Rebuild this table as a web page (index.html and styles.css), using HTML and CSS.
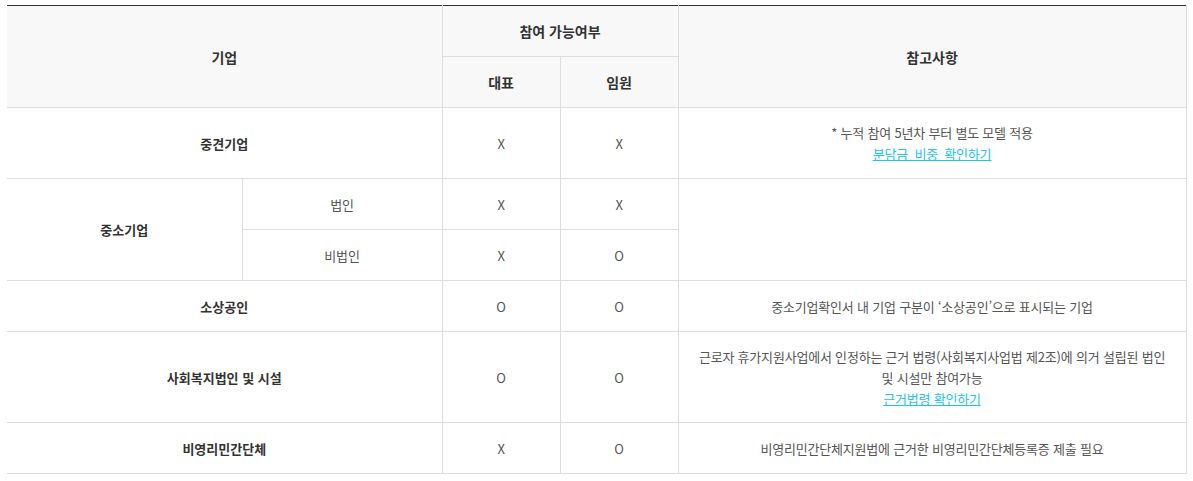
FILE: index.html
```html
<!DOCTYPE html>
<html lang="ko">
<head>
    <meta charset="UTF-8">
    <title>참여 가능여부</title>
    <link rel="stylesheet" href="styles.css">
</head>
<body>
    <div class="wrap">
        <table class="tbl">
            <colgroup>
                <col class="c-corp">
                <col class="c-sub">
                <col class="c-yn">
                <col class="c-yn">
                <col class="c-note">
            </colgroup>
            <thead>
                <tr>
                    <th colspan="2" rowspan="2" class="first">기업</th>
                    <th colspan="2">참여 가능여부</th>
                    <th rowspan="2">참고사항</th>
                </tr>
                <tr>
                    <th>대표</th>
                    <th>임원</th>
                </tr>
            </thead>
            <tbody>
                <tr class="tall">
                    <th colspan="2" class="first">중견기업</th>
                    <td>X</td>
                    <td>X</td>
                    <td>* 누적 참여 5년차 부터 별도 모델 적용<br><a href="#" class="wide">분담금 비중 확인하기</a></td>
                </tr>
                <tr>
                    <th rowspan="2" class="first">중소기업</th>
                    <td>법인</td>
                    <td>X</td>
                    <td>X</td>
                    <td rowspan="2"></td>
                </tr>
                <tr>
                    <td>비법인</td>
                    <td>X</td>
                    <td>O</td>
                </tr>
                <tr>
                    <th colspan="2" class="first">소상공인</th>
                    <td>O</td>
                    <td>O</td>
                    <td>중소기업확인서 내 기업 구분이 ‘소상공인’으로 표시되는 기업</td>
                </tr>
                <tr class="taller">
                    <th colspan="2" class="first">사회복지법인 및 시설</th>
                    <td>O</td>
                    <td>O</td>
                    <td>근로자 휴가지원사업에서 인정하는 근거 법령(사회복지사업법 제2조)에 의거 설립된 법인 및 시설만 참여가능<br><a href="#">근거법령 확인하기</a></td>
                </tr>
                <tr>
                    <th colspan="2" class="first">비영리민간단체</th>
                    <td>X</td>
                    <td>O</td>
                    <td>비영리민간단체지원법에 근거한 비영리민간단체등록증 제출 필요</td>
                </tr>
            </tbody>
        </table>
    </div>
</body>
</html>
```
FILE: styles.css
```css
body { margin: 0; background: #fff; font-family: "Noto Sans CJK KR", "Noto Sans", sans-serif; }
.wrap { padding: 5px 7px; }
.tbl { width: 1179px; border-collapse: collapse; table-layout: fixed; border-top: 1px solid #333; }
.c-corp { width: 235px; }
.c-sub { width: 200px; }
.c-yn { width: 118px; }
.c-note { width: 508px; }
.tbl th, .tbl td { border: 1px solid #ddd; text-align: center; vertical-align: middle; height: 51px; padding: 0 18px; box-sizing: border-box; }
.tbl .first { border-left: none; }
.tbl thead th { background: #f8f8f8; font-size: 14px; font-weight: 700; color: #333; }
.tbl thead tr:first-child th { border-top: none; }
.tbl tbody th { font-size: 13px; font-weight: 700; color: #333; }
.tbl tbody td { font-size: 13px; color: #555; line-height: 21px; letter-spacing: -0.2px; }
.tbl tbody tr.tall th, .tbl tbody tr.tall td { height: 71px; }
.tbl tbody tr.taller th, .tbl tbody tr.taller td { height: 91px; }
.tbl a { color: #22c3f2; text-decoration: underline; }
.tbl a.wide { word-spacing: 3px; }
```
